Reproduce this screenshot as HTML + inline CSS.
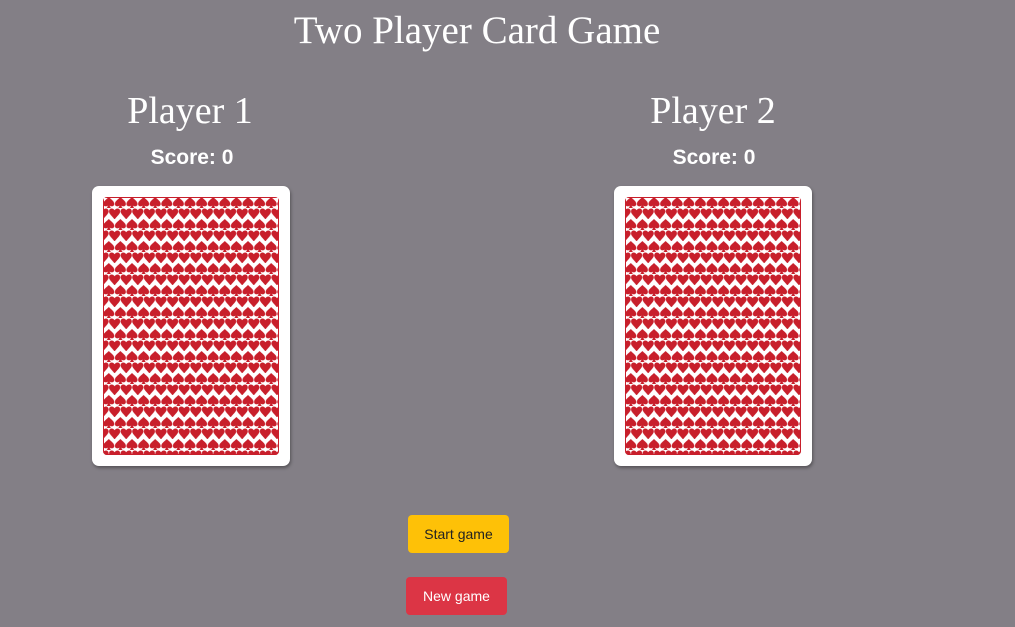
<!DOCTYPE html>
<html><head><style>
body{margin:0;width:1015px;height:627px;background:#837f86;position:relative;overflow:hidden;font-family:"Liberation Sans",sans-serif;color:#fff}
.t{position:absolute;font-family:"Liberation Serif",serif;white-space:nowrap;transform:translateX(-50%)}
.s{position:absolute;font-weight:bold;font-size:21px;transform:translateX(-50%);white-space:nowrap}
.card{position:absolute;width:198px;height:280px;background:#fff;border-radius:7px;box-shadow:1px 2px 3px rgba(0,0,0,.35)}
.card svg{position:absolute;left:11px;top:11px;border-radius:4px}
.b{position:absolute;height:38px;border-radius:4px;font-size:14px;text-align:center;line-height:38px}
</style></head><body>
<svg width="0" height="0" style="position:absolute"><defs>
<pattern id="p" width="11.6" height="22" patternUnits="userSpaceOnUse">
<rect width="11.6" height="22" fill="#fff"/>
<path d="M5.8 0 C3.5 2.5 0.3 4 0.3 7 C0.3 9.5 3.3 10 5 8.5 L3.8 11 L7.8 11 L6.6 8.5 C8.3 10 11.3 9.5 11.3 7 C11.3 4 8.1 2.5 5.8 0Z" fill="#c81f2b"/>
<path d="M0 13.2 C-1.8 10.5 -5.6 11 -5.6 14.5 C-5.6 17 -2 19.5 0 22.5 C2 19.5 5.6 17 5.6 14.5 C5.6 11 1.8 10.5 0 13.2Z M11.6 13.2 C9.8 10.5 6 11 6 14.5 C6 17 9.6 19.5 11.6 22.5 C13.6 19.5 17.2 17 17.2 14.5 C17.2 11 13.4 10.5 11.6 13.2Z" fill="#c81f2b"/>
</pattern></defs></svg>
<div class="t" style="left:477px;top:8px;font-size:39px">Two Player Card Game</div>
<div class="t" style="left:190px;top:89px;font-size:38px">Player 1</div>
<div class="t" style="left:713px;top:89px;font-size:38px">Player 2</div>
<div class="s" style="left:192px;top:146px">Score: 0</div>
<div class="s" style="left:714px;top:146px">Score: 0</div>
<div class="card" style="left:92px;top:186px"><svg width="176" height="258"><rect width="176" height="258" fill="url(#p)" stroke="#c81f2b" stroke-width="2"/></svg></div>
<div class="card" style="left:614px;top:186px"><svg width="176" height="258"><rect width="176" height="258" fill="url(#p)" stroke="#c81f2b" stroke-width="2"/></svg></div>
<div class="b" style="left:408px;top:515px;width:101px;background:#fec107;color:#222">Start game</div>
<div class="b" style="left:406px;top:577px;width:101px;background:#dc3545;color:#fff">New game</div>
</body></html>
